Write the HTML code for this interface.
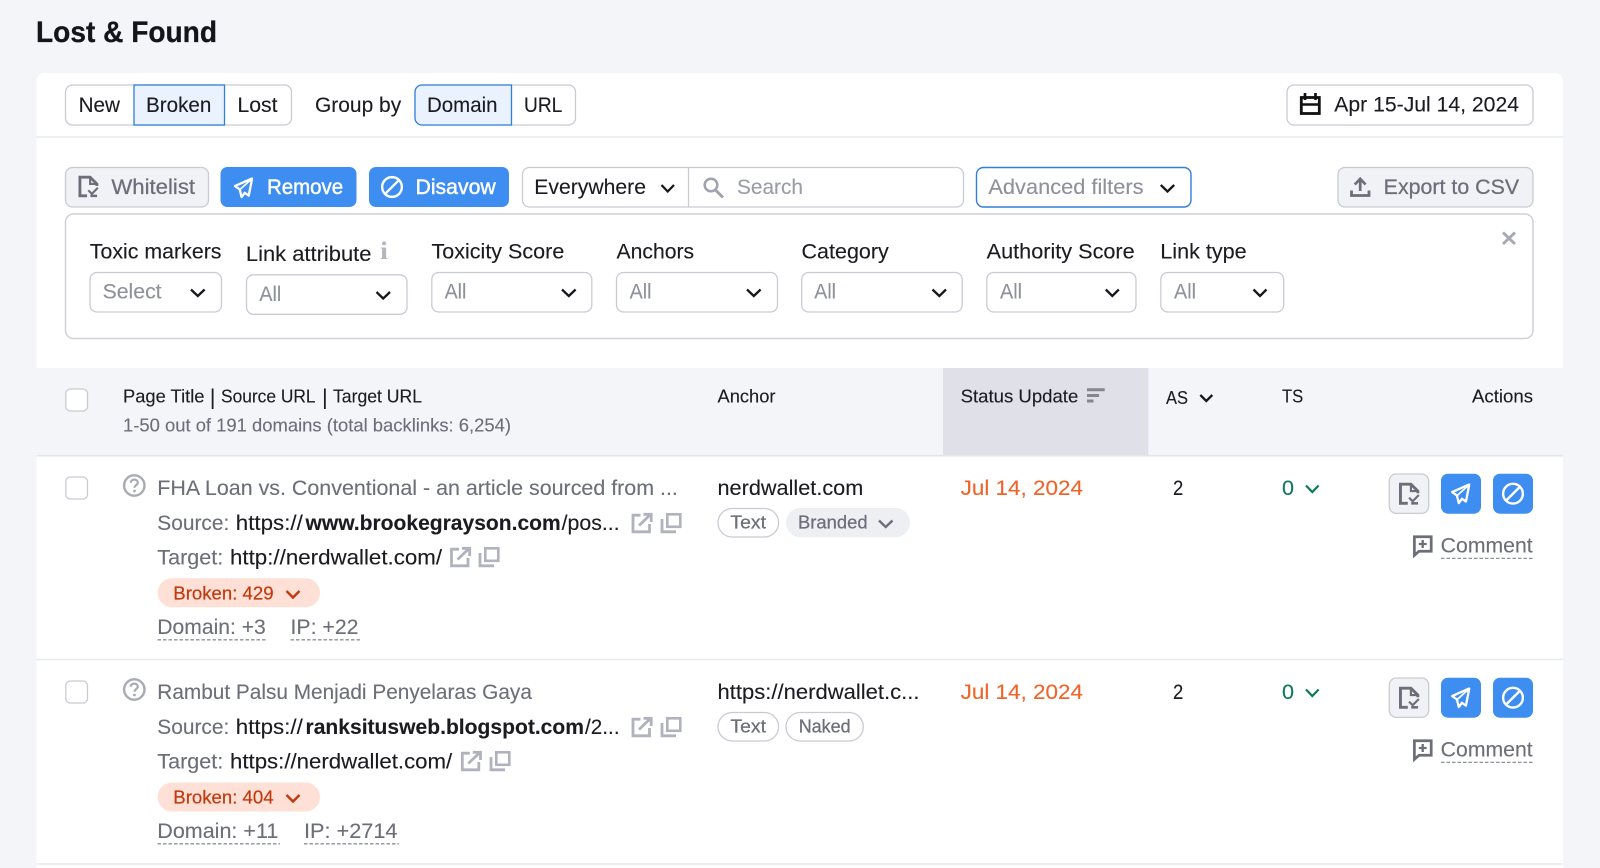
<!DOCTYPE html>
<html lang="en">
<head>
<meta charset="utf-8">
<title>Lost &amp; Found</title>
<style>
html,body{margin:0;padding:0;width:1600px;height:868px;overflow:hidden;background:#f4f5f9}
svg{display:block}
text{font-family:"Liberation Sans",Arial,sans-serif;font-size:21px;fill:#1b1b20;stroke:#1b1b20;stroke-width:.12;white-space:pre}
.g{fill:#6c6e79;stroke:#6c6e79}
.p{fill:#8e909b;stroke:#8e909b}
.s{font-size:18px}
.b{font-weight:700}
.w{fill:#fff;stroke:#fff;stroke-width:.45}
.o{fill:#f0642a;stroke:#f0642a}
.r{fill:#c13a0e;stroke:#c13a0e;stroke-width:.2}
.gm{fill:#6c6e79;stroke:#6c6e79;stroke-width:.25}
.t{fill:#0e7a5a;stroke:#0e7a5a}
.box{fill:#fff;stroke:#c9cbd3;stroke-width:1.3}
.gbtn{fill:#f1f2f5;stroke:#c9cbd3;stroke-width:1.3}
.blue{fill:#3d8ef0}
.cb{fill:#fff;stroke:#c9cbd3;stroke-width:1.3}
.dash{stroke:#8e909b;stroke-width:1.3;stroke-dasharray:3.5 2;fill:none}
.ch{fill:none;stroke:#17171c;stroke-width:2.3}
</style>
</head>
<body>
<svg xmlns="http://www.w3.org/2000/svg" width="1600" height="868" viewBox="0 0 1600 868">
<defs>
<symbol id="doc" viewBox="0 0 22 23" overflow="visible"><path d="M9.500 21.300H2V1.700H12.700L19.800 8.800V11" fill="none" stroke="#6c6e79" stroke-width="3"/><path d="M12.700 2V8.800H19.500" fill="none" stroke="#6c6e79" stroke-width="2.200"/><path d="M10.800 15.500L14.500 19.200L20.800 12.800" fill="none" stroke="#6c6e79" stroke-width="2.200"/><path d="M20 21.300H13" stroke="#6c6e79" stroke-width="2.600"/></symbol>
<symbol id="plane" viewBox="0 0 21 23" overflow="visible"><path d="M19.500 1.500L1.500 9.500L6.500 13L8.500 21L11.800 16.500L16 19.500Z" fill="none" stroke="#fff" stroke-width="2.400" stroke-linejoin="round"/><path d="M19 2L7 13" stroke="#fff" stroke-width="1.800"/></symbol>
<symbol id="ban" viewBox="0 0 24 24" overflow="visible"><circle cx="12" cy="12" r="10.300" fill="none" stroke="#fff" stroke-width="2.500"/><path d="M5 19L19 5" stroke="#fff" stroke-width="2.500"/></symbol>
<symbol id="ext" viewBox="0 0 21 20" overflow="visible"><path d="M9 2.200H1.500V18.800H18V11" fill="none" stroke="#b0b2bd" stroke-width="2.800"/><path d="M7.500 12.500L18.500 2M12 1.300H19.700V9" fill="none" stroke="#b0b2bd" stroke-width="2.800"/></symbol>
<symbol id="copy" viewBox="0 0 21 20" overflow="visible"><rect x="6.800" y="1.300" width="13" height="12.500" fill="none" stroke="#b0b2bd" stroke-width="2.600"/><path d="M1.500 6V18.800H15.500" fill="none" stroke="#b0b2bd" stroke-width="2.800"/></symbol>
<symbol id="q" viewBox="0 0 23 23" overflow="visible"><circle cx="11.500" cy="11.500" r="10.200" fill="none" stroke="#a8aab5" stroke-width="2.400"/><path d="M8 8.800C8 6.600 9.600 5.600 11.500 5.600C13.500 5.600 15 6.800 15 8.600C15 11 11.700 11 11.700 13.800" fill="none" stroke="#a8aab5" stroke-width="2.200"/><circle cx="11.700" cy="17" r="1.400" fill="#a8aab5"/></symbol>
<symbol id="cmt" viewBox="0 0 20 22" overflow="visible"><path d="M1.500 1.500H18.700V16.300H6.300L1.500 20.500Z" fill="none" stroke="#6c6e79" stroke-width="2.800"/><path d="M10 4.800V13M6 8.900H14" stroke="#6c6e79" stroke-width="2.400"/></symbol>
</defs>

<rect width="1600" height="868" fill="#f4f5f9"/>
<text x="36" y="42" class="b" style="font-size:29.500px;fill:#14141a;stroke:#14141a;stroke-width:.3" textLength="181" lengthAdjust="spacingAndGlyphs">Lost &amp; Found</text>

<!-- card -->
<path d="M36.500 868V81a8 8 0 0 1 8-8H1555a8 8 0 0 1 8 8V868Z" fill="#fff"/>

<!-- segments -->
<rect x="65.500" y="85" width="226" height="40" rx="7" class="box"/>
<rect x="134" y="85" width="90.500" height="40" fill="#e9f2fe" stroke="#2f7fdc" stroke-width="1.300"/>
<text x="78.600" y="112" textLength="41.400" lengthAdjust="spacingAndGlyphs">New</text>
<text x="146" y="112" textLength="65.300" lengthAdjust="spacingAndGlyphs">Broken</text>
<text x="237.400" y="112" textLength="40.200" lengthAdjust="spacingAndGlyphs">Lost</text>
<text x="315" y="112" textLength="86.200" lengthAdjust="spacingAndGlyphs">Group by</text>
<rect x="415" y="85" width="160.500" height="40" rx="7" class="box"/>
<path d="M511.500 85H422a7 7 0 0 0-7 7V118a7 7 0 0 0 7 7H511.500Z" fill="#e9f2fe" stroke="#2f7fdc" stroke-width="1.300"/>
<text x="427" y="112" textLength="70.500" lengthAdjust="spacingAndGlyphs">Domain</text>
<text x="524" y="112" textLength="38.300" lengthAdjust="spacingAndGlyphs">URL</text>

<!-- date -->
<rect x="1287" y="85" width="246" height="40" rx="7" class="box"/>
<path d="M1305 93V100M1315.500 93V100" stroke="#111" stroke-width="2.700"/>
<rect x="1301.300" y="97.500" width="18" height="16" fill="none" stroke="#111" stroke-width="2.800"/>
<path d="M1301 104.500H1320" stroke="#111" stroke-width="2.600"/>
<text x="1334.300" y="111.500" textLength="184.700" lengthAdjust="spacingAndGlyphs">Apr 15-Jul 14, 2024</text>

<path d="M36.500 137H1563" stroke="#e9eaef" stroke-width="1.600"/>

<!-- toolbar -->
<rect x="65.500" y="167.500" width="143" height="39.500" rx="7" class="gbtn"/>
<use href="#doc" x="78" y="175.500" width="21" height="22"/>
<text x="111.400" y="194" class="g" style="stroke-width:.25" textLength="83.700" lengthAdjust="spacingAndGlyphs">Whitelist</text>

<rect x="220.500" y="167" width="136" height="40" rx="7" class="blue"/>
<use href="#plane" x="233.500" y="177" width="20" height="22"/>
<text x="267" y="194" class="w" textLength="76.100" lengthAdjust="spacingAndGlyphs">Remove</text>

<rect x="369" y="167" width="140" height="40" rx="7" class="blue"/>
<use href="#ban" x="380.500" y="175.500" width="23" height="23"/>
<text x="415.500" y="194" class="w" textLength="80.200" lengthAdjust="spacingAndGlyphs">Disavow</text>

<rect x="522.500" y="167.500" width="441" height="39.500" rx="7" class="box"/>
<path d="M688.500 167.500V207" stroke="#c9cbd3" stroke-width="1.300"/>
<text x="534.300" y="194" textLength="111.700" lengthAdjust="spacingAndGlyphs">Everywhere</text>
<path class="ch" d="M661.500 185L667.700 191.500L674 185"/>
<circle cx="711" cy="185" r="6.300" fill="none" stroke="#a0a2ad" stroke-width="2.500"/>
<path d="M715.500 190L723 197.500" stroke="#a0a2ad" stroke-width="3"/>
<text x="737" y="194" style="fill:#9a9ca8;stroke:#9a9ca8" textLength="66" lengthAdjust="spacingAndGlyphs">Search</text>

<rect x="976.500" y="167.500" width="214.500" height="39.500" rx="7" fill="#fff" stroke="#2f7fdc" stroke-width="1.400"/>
<text x="988.400" y="194" class="p" textLength="155.100" lengthAdjust="spacingAndGlyphs">Advanced filters</text>
<path class="ch" d="M1160.800 185L1167.500 191.500L1174.200 185"/>

<rect x="1338" y="167.500" width="195" height="39.500" rx="7" class="gbtn"/>
<path d="M1351.500 190.500V195.500H1369V190.500" fill="none" stroke="#6c6e79" stroke-width="2.800"/>
<path d="M1360.200 191V179.500M1354.800 184.500L1360.200 178.800L1365.600 184.500" fill="none" stroke="#6c6e79" stroke-width="2.700"/>
<text x="1383.700" y="194" class="g" style="stroke-width:.25" textLength="135.400" lengthAdjust="spacingAndGlyphs">Export to CSV</text>

<!-- filter panel -->
<rect x="65.500" y="214" width="1467.500" height="124.500" rx="8" fill="#fff" stroke="#cfd1d8" stroke-width="1.500"/>
<path d="M1503 232.500L1515 244M1515 232.500L1503 244" stroke="#a6a8b3" stroke-width="2.900"/>

<text x="89.800" y="258.300" textLength="131.700" lengthAdjust="spacingAndGlyphs">Toxic markers</text>
<text x="245.900" y="261" textLength="125.600" lengthAdjust="spacingAndGlyphs">Link attribute</text>
<text x="380" y="259" style="font-family:'Liberation Serif',serif;font-size:25px;font-weight:700;fill:#b4b6c0;stroke:none" textLength="8" lengthAdjust="spacingAndGlyphs">i</text>
<text x="431.500" y="258.300" textLength="132.800" lengthAdjust="spacingAndGlyphs">Toxicity Score</text>
<text x="616.500" y="258.300" textLength="77.600" lengthAdjust="spacingAndGlyphs">Anchors</text>
<text x="801.500" y="258.300" textLength="87.300" lengthAdjust="spacingAndGlyphs">Category</text>
<text x="986.700" y="258.300" textLength="148" lengthAdjust="spacingAndGlyphs">Authority Score</text>
<text x="1160.300" y="258.300" textLength="86.300" lengthAdjust="spacingAndGlyphs">Link type</text>

<rect x="90" y="272.500" width="131.500" height="39.500" rx="7" class="box"/>
<text x="102.600" y="298.700" class="p" textLength="59" lengthAdjust="spacingAndGlyphs">Select</text>
<path class="ch" d="M191 289.500L197.800 296L204.600 289.500"/>

<rect x="246.500" y="274.800" width="160.500" height="39.500" rx="7" class="box"/>
<text x="259.400" y="301" class="p" textLength="21.900" lengthAdjust="spacingAndGlyphs">All</text>
<path class="ch" d="M376.500 292L383.200 298.500L390 292"/>

<rect x="431.800" y="272.500" width="160" height="39.500" rx="7" class="box"/>
<text x="444.600" y="298.700" class="p" textLength="21.800" lengthAdjust="spacingAndGlyphs">All</text>
<path class="ch" d="M562 289.500L568.800 296L575.600 289.500"/>

<rect x="616.500" y="272.500" width="161" height="39.500" rx="7" class="box"/>
<text x="629.600" y="298.700" class="p" textLength="21.900" lengthAdjust="spacingAndGlyphs">All</text>
<path class="ch" d="M747 289.500L753.800 296L760.600 289.500"/>

<rect x="801.700" y="272.500" width="160.500" height="39.500" rx="7" class="box"/>
<text x="814.300" y="298.700" class="p" textLength="21.700" lengthAdjust="spacingAndGlyphs">All</text>
<path class="ch" d="M932.500 289.500L939.300 296L946 289.500"/>

<rect x="986.800" y="272.500" width="149.200" height="39.500" rx="7" class="box"/>
<text x="1000" y="298.700" class="p" textLength="22" lengthAdjust="spacingAndGlyphs">All</text>
<path class="ch" d="M1105.800 289.500L1112.300 296L1118.800 289.500"/>

<rect x="1160.800" y="272.500" width="122.900" height="39.500" rx="7" class="box"/>
<text x="1174" y="298.700" class="p" textLength="22" lengthAdjust="spacingAndGlyphs">All</text>
<path class="ch" d="M1253.500 289.500L1260 296L1266.500 289.500"/>

<!-- table header -->
<rect x="36.500" y="368" width="1526.500" height="87" fill="#f4f5f9"/>
<rect x="943" y="368" width="205.300" height="87" fill="#e0e1e8"/>
<path d="M36.500 455.700H1563" stroke="#e4e5ea" stroke-width="1.600"/>
<rect x="65.800" y="389" width="21.700" height="22" rx="4.500" class="cb"/>

<text x="123" y="402.700" class="s" textLength="81.500" lengthAdjust="spacingAndGlyphs">Page Title</text>
<text x="209.800" y="404.500" style="font-size:22px;stroke:none">|</text>
<text x="221" y="402.700" class="s" textLength="94.600" lengthAdjust="spacingAndGlyphs">Source URL</text>
<text x="322" y="404.500" style="font-size:22px;stroke:none">|</text>
<text x="333" y="402.700" class="s" textLength="89" lengthAdjust="spacingAndGlyphs">Target URL</text>
<text x="123" y="431.700" class="s g" textLength="388" lengthAdjust="spacingAndGlyphs">1-50 out of 191 domains (total backlinks: 6,254)</text>

<text x="717.500" y="402.700" class="s" textLength="58" lengthAdjust="spacingAndGlyphs">Anchor</text>
<text x="960.600" y="402.700" class="s" textLength="117.700" lengthAdjust="spacingAndGlyphs">Status Update</text>
<path d="M1087 389.700H1104.700M1087 395.500H1099M1087 401H1093.500" stroke="#85878f" stroke-width="3"/>
<text x="1166" y="404" class="s" textLength="22" lengthAdjust="spacingAndGlyphs">AS</text>
<path class="ch" d="M1200.300 395L1206.300 401L1212.300 395"/>
<text x="1282" y="402.700" class="s" textLength="21.300" lengthAdjust="spacingAndGlyphs">TS</text>
<text x="1472" y="402.700" class="s" textLength="61" lengthAdjust="spacingAndGlyphs">Actions</text>

<!-- row 1 -->
<rect x="65.800" y="477" width="21.700" height="22" rx="4.500" class="cb"/>
<use href="#q" x="122.800" y="474" width="23" height="23"/>
<text x="157.300" y="495" class="g" textLength="520.600" lengthAdjust="spacingAndGlyphs">FHA Loan vs. Conventional - an article sourced from ...</text>
<text x="157.300" y="530" class="g" textLength="72" lengthAdjust="spacingAndGlyphs">Source:</text>
<text x="235.800" y="530" textLength="67" lengthAdjust="spacingAndGlyphs">https://</text>
<text x="305.500" y="530" class="b" textLength="255.200" lengthAdjust="spacingAndGlyphs">www.brookegrayson.com</text>
<text x="561.600" y="530" textLength="58" lengthAdjust="spacingAndGlyphs">/pos...</text>
<use href="#ext" x="631.500" y="513" width="21" height="20"/>
<use href="#copy" x="660.500" y="513" width="21" height="20"/>
<text x="157.300" y="564.700" class="g" textLength="66" lengthAdjust="spacingAndGlyphs">Target:</text>
<text x="230" y="564.700" textLength="212.100" lengthAdjust="spacingAndGlyphs">http://nerdwallet.com/</text>
<use href="#ext" x="450" y="547" width="21" height="20"/>
<use href="#copy" x="478.500" y="547" width="21" height="20"/>
<rect x="157.600" y="578.300" width="162.400" height="29" rx="14.500" fill="#ffe0d6"/>
<text x="173.300" y="599.300" class="s r" textLength="100.300" lengthAdjust="spacingAndGlyphs">Broken: 429</text>
<path d="M286.500 591L293 597.500L299.500 591" fill="none" stroke="#c13a0e" stroke-width="2.400"/>
<text x="157.300" y="634" class="g" textLength="108.500" lengthAdjust="spacingAndGlyphs">Domain: +3</text>
<path class="dash" d="M157.500 639.800H267"/>
<text x="290.500" y="634" class="g" textLength="68" lengthAdjust="spacingAndGlyphs">IP: +22</text>
<path class="dash" d="M290.500 639.800H360"/>

<text x="717.500" y="495" textLength="145.800" lengthAdjust="spacingAndGlyphs">nerdwallet.com</text>
<rect x="718" y="508.500" width="60.600" height="28.500" rx="14.200" class="box"/>
<text x="730.400" y="528.300" class="s gm" textLength="35.600" lengthAdjust="spacingAndGlyphs">Text</text>
<rect x="786" y="508" width="124" height="29.300" rx="14.600" fill="#eeeff3"/>
<text x="798" y="528.300" class="s gm" textLength="69.600" lengthAdjust="spacingAndGlyphs">Branded</text>
<path d="M879 520.500L885.700 527L892.500 520.500" fill="none" stroke="#6c6e79" stroke-width="2.400"/>
<text x="960.600" y="495" class="o" textLength="122.400" lengthAdjust="spacingAndGlyphs">Jul 14, 2024</text>
<text x="1173" y="495" textLength="10.300" lengthAdjust="spacingAndGlyphs">2</text>
<text x="1282" y="495" class="t" textLength="12" lengthAdjust="spacingAndGlyphs">0</text>
<path d="M1306 485.500L1312.300 492L1318.600 485.500" fill="none" stroke="#0e7a5a" stroke-width="2.200"/>
<rect x="1389.300" y="474" width="39.400" height="39.400" rx="7" class="gbtn"/>
<use href="#doc" x="1398.500" y="482.500" width="21.500" height="22.500"/>
<rect x="1441" y="473.700" width="40" height="40" rx="7" class="blue"/>
<use href="#plane" x="1450.700" y="483" width="20" height="22"/>
<rect x="1493" y="473.700" width="40" height="40" rx="7" class="blue"/>
<use href="#ban" x="1501.500" y="482.200" width="23" height="23"/>
<use href="#cmt" x="1412.700" y="535.300" width="20" height="21.500"/>
<text x="1440.700" y="552.400" class="g" textLength="92" lengthAdjust="spacingAndGlyphs">Comment</text>
<path class="dash" d="M1441 558.400H1533"/>

<path d="M36.500 659.500H1563" stroke="#e8e9ee" stroke-width="1.600"/>

<!-- row 2 -->
<rect x="65.800" y="681" width="21.700" height="22" rx="4.500" class="cb"/>
<use href="#q" x="122.800" y="678" width="23" height="23"/>
<text x="157.300" y="699" class="g" textLength="374.600" lengthAdjust="spacingAndGlyphs">Rambut Palsu Menjadi Penyelaras Gaya</text>
<text x="157.300" y="734" class="g" textLength="72" lengthAdjust="spacingAndGlyphs">Source:</text>
<text x="235.800" y="734" textLength="67" lengthAdjust="spacingAndGlyphs">https://</text>
<text x="305.500" y="734" class="b" textLength="278.500" lengthAdjust="spacingAndGlyphs">ranksitusweb.blogspot.com</text>
<text x="585" y="734" textLength="34.600" lengthAdjust="spacingAndGlyphs">/2...</text>
<use href="#ext" x="631.500" y="717" width="21" height="20"/>
<use href="#copy" x="660.500" y="717" width="21" height="20"/>
<text x="157.300" y="768.700" class="g" textLength="66" lengthAdjust="spacingAndGlyphs">Target:</text>
<text x="230" y="768.700" textLength="222.200" lengthAdjust="spacingAndGlyphs">https://nerdwallet.com/</text>
<use href="#ext" x="460.800" y="751" width="21" height="20"/>
<use href="#copy" x="489.500" y="751" width="21" height="20"/>
<rect x="157.600" y="782.500" width="162.400" height="29" rx="14.500" fill="#ffe0d6"/>
<text x="173.300" y="803.300" class="s r" textLength="100.300" lengthAdjust="spacingAndGlyphs">Broken: 404</text>
<path d="M286.500 795L293 801.500L299.500 795" fill="none" stroke="#c13a0e" stroke-width="2.400"/>
<text x="157.300" y="838" class="g" textLength="121" lengthAdjust="spacingAndGlyphs">Domain: +11</text>
<path class="dash" d="M157.500 843.800H280"/>
<text x="304" y="838" class="g" textLength="93.500" lengthAdjust="spacingAndGlyphs">IP: +2714</text>
<path class="dash" d="M304 843.800H399"/>

<text x="717.500" y="699" textLength="202" lengthAdjust="spacingAndGlyphs">https://nerdwallet.c...</text>
<rect x="718" y="712.500" width="60.600" height="28.500" rx="14.200" class="box"/>
<text x="730.400" y="732.300" class="s gm" textLength="35.600" lengthAdjust="spacingAndGlyphs">Text</text>
<rect x="786" y="712.500" width="77.300" height="28.500" rx="14.200" class="box"/>
<text x="798.700" y="732.300" class="s gm" textLength="52" lengthAdjust="spacingAndGlyphs">Naked</text>
<text x="960.600" y="699" class="o" textLength="122.400" lengthAdjust="spacingAndGlyphs">Jul 14, 2024</text>
<text x="1173" y="699" textLength="10.300" lengthAdjust="spacingAndGlyphs">2</text>
<text x="1282" y="699" class="t" textLength="12" lengthAdjust="spacingAndGlyphs">0</text>
<path d="M1306 689.500L1312.300 696L1318.600 689.500" fill="none" stroke="#0e7a5a" stroke-width="2.200"/>
<rect x="1389.300" y="678" width="39.400" height="39.400" rx="7" class="gbtn"/>
<use href="#doc" x="1398.500" y="686.500" width="21.500" height="22.500"/>
<rect x="1441" y="677.700" width="40" height="40" rx="7" class="blue"/>
<use href="#plane" x="1450.700" y="687" width="20" height="22"/>
<rect x="1493" y="677.700" width="40" height="40" rx="7" class="blue"/>
<use href="#ban" x="1501.500" y="686.200" width="23" height="23"/>
<use href="#cmt" x="1412.700" y="739.300" width="20" height="21.500"/>
<text x="1440.700" y="756.400" class="g" textLength="92" lengthAdjust="spacingAndGlyphs">Comment</text>
<path class="dash" d="M1441 762.400H1533"/>

<path d="M36.500 864H1563" stroke="#e8e9ee" stroke-width="1.600"/>
</svg>
</body>
</html>
